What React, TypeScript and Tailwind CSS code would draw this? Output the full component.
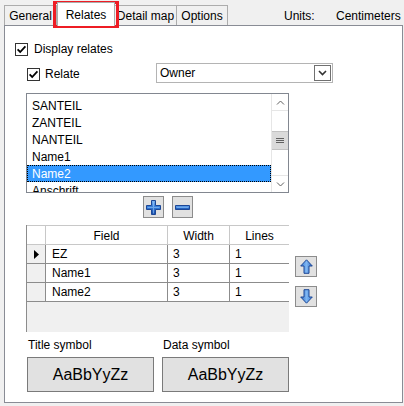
import React from 'react';

const listItems = ['SANTEIL', 'ZANTEIL', 'NANTEIL', 'Name1', 'Name2', 'Anschrift'];
const fieldRows = [
  ['EZ', '3', '1'],
  ['Name1', '3', '1'],
  ['Name2', '3', '1'],
];

function CheckBox() {
  return (
    <span className="w-[13px] h-[13px] border border-[#333333] bg-white flex items-center justify-center shrink-0">
      <svg width="11" height="11" viewBox="0 0 11 11">
        <path d="M1.6 5.4 L4.2 8 L9.4 2.4" fill="none" stroke="#000" strokeWidth="1.8" />
      </svg>
    </span>
  );
}

function BlueDefs() {
  return (
    <defs>
      <linearGradient id="blueFill" x1="0" y1="0" x2="0" y2="1">
        <stop offset="0" stopColor="#7db4f2" />
        <stop offset="0.5" stopColor="#2f78d8" />
        <stop offset="1" stopColor="#1c4fa8" />
      </linearGradient>
      <linearGradient id="blueFillH" x1="0" y1="0" x2="1" y2="0">
        <stop offset="0" stopColor="#3a7fd9" />
        <stop offset="0.5" stopColor="#7fb6f2" />
        <stop offset="1" stopColor="#2a68c4" />
      </linearGradient>
    </defs>
  );
}

function PlusIcon() {
  return (
    <svg width="15" height="15" viewBox="0 0 15 15">
      <BlueDefs />
      <path d="M5.5 0.5 H9.5 V5.5 H14.5 V9.5 H9.5 V14.5 H5.5 V9.5 H0.5 V5.5 H5.5 Z" fill="url(#blueFill)" stroke="#1d4796" strokeWidth="1" />
      <path d="M7.5 1.5 V13.5 M1.5 7.5 H13.5" stroke="#9cc8f7" strokeWidth="1" opacity="0.6" />
    </svg>
  );
}

function MinusIcon() {
  return (
    <svg width="15" height="15" viewBox="0 0 15 15">
      <BlueDefs />
      <path d="M0.5 5.5 H14.5 V9.5 H0.5 Z" fill="url(#blueFill)" stroke="#1d4796" strokeWidth="1" />
      <path d="M1.5 7.5 H13.5" stroke="#9cc8f7" strokeWidth="1" opacity="0.6" />
    </svg>
  );
}

function ArrowIcon({ down }: { down?: boolean }) {
  return (
    <svg width="13" height="15" viewBox="0 0 13 15" className={down ? 'rotate-180' : ''}>
      <BlueDefs />
      <path d="M6.5 0.8 L12.3 7 H9 V14.3 H4 V7 H0.7 Z" fill="url(#blueFillH)" stroke="#1d4796" strokeWidth="1" strokeLinejoin="round" />
    </svg>
  );
}

function SmallButton({ children }: { children: React.ReactNode }) {
  return (
    <div className="w-[21px] h-[22px] bg-[#e1e1e1] border border-[#8c8c8c] flex items-center justify-center">
      {children}
    </div>
  );
}

export default function App() {
  return (
    <div className="w-[404px] h-[406px] bg-[#f0f0f0] overflow-hidden relative text-[12px] text-black font-['Liberation_Sans',Arial,sans-serif]">
      {/* tab strip */}
      <div className="flex items-end h-[25px] pl-[4px]">
        <div className="w-[53px] h-[20px] border border-b-0 border-[#acacac] bg-[#f0f0f0] flex items-center justify-center">
          General
        </div>
        <div className="w-[58px] h-[24px] -mb-px border border-b-0 border-[#acacac] bg-white flex items-center justify-center relative z-10">
          Relates
        </div>
        <div className="w-[62px] h-[20px] border border-b-0 border-l-0 border-[#acacac] bg-[#f0f0f0] flex items-center justify-center">
          Detail map
        </div>
        <div className="w-[51px] h-[20px] border border-b-0 border-l-0 border-[#acacac] bg-[#f0f0f0] flex items-center justify-center">
          Options
        </div>
        <div className="flex self-start pt-[7px] ml-[56px]">
          <span className="w-[52px]">Units:</span>
          <span>Centimeters</span>
        </div>
      </div>

      {/* tab page */}
      <div className="ml-[4px] w-[399px] h-[378px] border border-[#898c95] bg-white flex flex-col">
        <div className="flex items-center gap-[6px] ml-[10px] mt-[16px] h-[14px]">
          <CheckBox />
          <span>Display relates</span>
        </div>

        <div className="flex items-center ml-[22px] mt-[7px] h-[20px]">
          <div className="w-[129px] flex items-center gap-[5px] pt-[2px]">
            <CheckBox />
            <span>Relate</span>
          </div>
          <div className="w-[177px] h-[20px] border border-[#b4b4b4] bg-white flex items-center">
            <span className="flex-1 pl-[3px]">Owner</span>
            <div className="w-[17px] h-[16px] mr-px border border-[#707070] bg-white flex items-center justify-center">
              <svg width="9" height="6" viewBox="0 0 9 6">
                <path d="M1 1 L4.5 4.5 L8 1" fill="none" stroke="#333" strokeWidth="1.6" />
              </svg>
            </div>
          </div>
        </div>

        {/* field list */}
        <div className="ml-[21px] mt-[10px] w-[263px] h-[100px] border border-[#828790] bg-white flex overflow-hidden">
          <div className="flex-1 pt-[3px] overflow-hidden">
            {listItems.map((item) =>
              item === 'Name2' ? (
                <div key={item} className="h-[17px] leading-[16px] pl-[4px] bg-[#3399ff] text-white border border-dotted border-black">
                  {item}
                </div>
              ) : (
                <div key={item} className="h-[17px] leading-[16px] pl-[4px] border border-transparent">
                  {item}
                </div>
              )
            )}
          </div>
          <div className="w-[17px] border-l border-[#e6e6e6] flex flex-col">
            <div className="h-[17px] border-b border-[#e6e6e6] flex items-center justify-center">
              <svg width="9" height="5" viewBox="0 0 9 5">
                <path d="M1 4.5 L4.5 1 L8 4.5" fill="none" stroke="#606060" strokeWidth="1" />
              </svg>
            </div>
            <div className="h-[20px]" />
            <div className="h-[19px] bg-[#dadada] border-y border-[#c2c2c2] flex items-center justify-center">
              <svg width="8" height="7" viewBox="0 0 8 7">
                <path d="M0 1.5 H8 M0 3.5 H8 M0 5.5 H8" stroke="#606060" strokeWidth="1" />
              </svg>
            </div>
            <div className="flex-1" />
            <div className="h-[17px] border-t border-[#e6e6e6] flex items-center justify-center">
              <svg width="9" height="5" viewBox="0 0 9 5">
                <path d="M1 0.5 L4.5 4 L8 0.5" fill="none" stroke="#606060" strokeWidth="1" />
              </svg>
            </div>
          </div>
        </div>

        <div className="flex gap-[8px] ml-[138px] mt-[3px]">
          <SmallButton>
            <PlusIcon />
          </SmallButton>
          <SmallButton>
            <MinusIcon />
          </SmallButton>
        </div>

        {/* field grid */}
        <div className="flex ml-[21px] mt-[7px]">
          <div className="w-[263px] h-[107px] bg-[#f0f0f0] border-l border-[#8c8c8c] flex flex-col">
            <div className="flex h-[20px] bg-white border-t border-[#c8c8c8]">
              <div className="w-[19px] border-r border-b border-[#c8c8c8]" />
              <div className="w-[122px] border-r border-b border-[#c8c8c8] flex items-center justify-center pt-px">Field</div>
              <div className="w-[62px] border-r border-b border-[#c8c8c8] flex items-center justify-center pt-px">Width</div>
              <div className="w-[59px] border-b border-[#c8c8c8] flex items-center justify-center pt-px">Lines</div>
            </div>
            {fieldRows.map((row, i) => (
              <div key={row[0]} className="flex h-[19px]">
                <div className="w-[19px] border-r border-b border-[#8c8c8c] bg-[#f0f0f0] flex items-center justify-center">
                  {i === 0 && (
                    <svg width="5" height="9" viewBox="0 0 5 9">
                      <path d="M0 0 L5 4.5 L0 9 Z" fill="#000" />
                    </svg>
                  )}
                </div>
                <div className="w-[122px] border-r border-b border-[#8c8c8c] bg-white pl-[6px] flex items-center">{row[0]}</div>
                <div className="w-[62px] border-r border-b border-[#8c8c8c] bg-white pl-[5px] flex items-center">{row[1]}</div>
                <div className="w-[59px] border-b border-[#8c8c8c] bg-white pl-[5px] flex items-center">{row[2]}</div>
              </div>
            ))}
          </div>
          <div className="flex flex-col gap-[9px] ml-[6px] mt-[31px]">
            <div className="w-[22px] h-[21px] bg-[#e1e1e1] border border-[#8c8c8c] flex items-center justify-center">
              <ArrowIcon />
            </div>
            <div className="w-[22px] h-[21px] bg-[#e1e1e1] border border-[#8c8c8c] flex items-center justify-center">
              <ArrowIcon down />
            </div>
          </div>
        </div>

        {/* symbol previews */}
        <div className="flex mt-[6px] ml-[23px] h-[14px] leading-[14px]">
          <span className="w-[135px]">Title symbol</span>
          <span>Data symbol</span>
        </div>
        <div className="flex gap-[8px] ml-[22px] mt-[5px]">
          <div className="w-[127px] h-[35px] bg-[#e1e1e1] border border-[#7a7a7a] flex items-center justify-center text-[16px]">
            AaBbYyZz
          </div>
          <div className="w-[127px] h-[35px] bg-[#e1e1e1] border border-[#7a7a7a] flex items-center justify-center text-[16px]">
            AaBbYyZz
          </div>
        </div>
      </div>

      {/* highlight around the active tab */}
      <div className="absolute left-[53px] top-[1px] w-[66px] h-[27px] border-[3px] border-[#ee1c24]" />
    </div>
  );
}
